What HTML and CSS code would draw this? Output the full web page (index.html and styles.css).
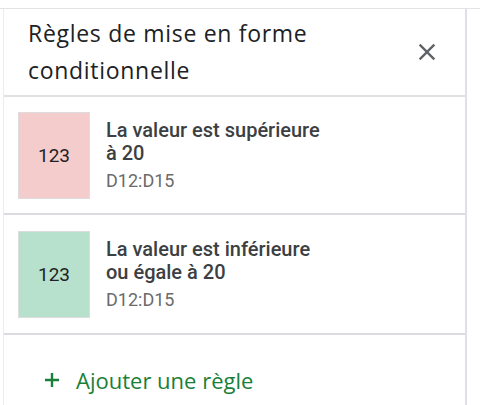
FILE: index.html
```html
<!DOCTYPE html>
<html lang="fr">
<head>
<meta charset="utf-8">
<title>Règles de mise en forme conditionnelle</title>
<link rel="stylesheet" href="styles.css">
</head>
<body>
<div class="sheet">
  <aside class="panel">
    <header class="panel-header">
      <h1 class="panel-title">Règles de mise en forme conditionnelle</h1>
      <button class="close-btn" aria-label="Fermer">
        <svg viewBox="0 0 24 24" width="28" height="28"><path fill="#5f6368" d="M19 6.41 17.59 5 12 10.59 6.41 5 5 6.41 10.59 12 5 17.59 6.41 19 12 13.41 17.59 19 19 17.59 13.41 12z"/></svg>
      </button>
    </header>
    <div class="rule">
      <div class="swatch swatch-red">123</div>
      <div class="rule-text">
        <div class="rule-title">La valeur est supérieure<br>à 20</div>
        <div class="rule-range">D12:D15</div>
      </div>
    </div>
    <div class="rule rule-second">
      <div class="swatch swatch-green">123</div>
      <div class="rule-text">
        <div class="rule-title">La valeur est inférieure<br>ou égale à 20</div>
        <div class="rule-range">D12:D15</div>
      </div>
    </div>
    <div class="add-rule">
      <svg class="add-icon" viewBox="0 0 16 16" width="16" height="16"><path d="M8 1v14M1 8h14" stroke="#188038" stroke-width="2.4" fill="none"/></svg>
      <span class="add-label">Ajouter une règle</span>
    </div>
  </aside>
</div>
</body>
</html>
```
FILE: styles.css
```css
html, body {
  margin: 0;
  padding: 0;
  background: #ffffff;
}
body {
  font-family: Roboto, "Liberation Sans", sans-serif;
  overflow: hidden;
}
.sheet {
  margin-top: 8px;
  border-top: 1px solid #e3e3e7;
  height: 397px;
}
.panel {
  margin-left: 3px;
  width: 461px;
  height: 100%;
  border-left: 1px solid #ececef;
  border-right: 2px solid #e0e0e6;
  box-sizing: content-box;
}
.panel-header {
  display: flex;
  align-items: center;
  justify-content: space-between;
  padding: 6px 24px 6px 24px;
  border-bottom: 2px solid #e2e2e6;
}
.panel-title {
  margin: 0;
  width: 340px;
  font-family: "Open Sans", sans-serif;
  font-weight: 400;
  font-size: 23px;
  letter-spacing: 0.7px;
  line-height: 37px;
  color: #202124;
}
.close-btn {
  border: 0;
  background: none;
  padding: 0;
  width: 28px;
  height: 28px;
  display: flex;
}
.rule {
  display: flex;
  align-items: flex-start;
  gap: 16px;
  padding: 15px 0 14px 14px;
  border-bottom: 2px solid #dcdce0;
}
.rule-second {
  padding: 16px 0 15px 14px;
}
.swatch {
  width: 70px;
  height: 85px;
  border: 1px solid #dddddd;
  display: flex;
  align-items: center;
  justify-content: center;
  font-size: 19px;
  color: #222222;
}
.swatch-red {
  background: #f4cccc;
}
.swatch-green {
  background: #b7e1cd;
}
.rule-text {
  padding-top: 7px;
}
.rule-title {
  font-size: 20px;
  font-weight: 500;
  line-height: 23px;
  color: #3c4043;
}
.rule-range {
  margin-top: 5px;
  font-size: 18px;
  line-height: 22px;
  color: #6b6b6b;
}
.add-rule {
  display: flex;
  align-items: center;
  gap: 16px;
  padding: 32px 0 0 40px;
}
.add-label {
  font-family: "Open Sans", sans-serif;
  font-weight: 500;
  font-size: 22px;
  line-height: 26px;
  color: #188038;
}
```
